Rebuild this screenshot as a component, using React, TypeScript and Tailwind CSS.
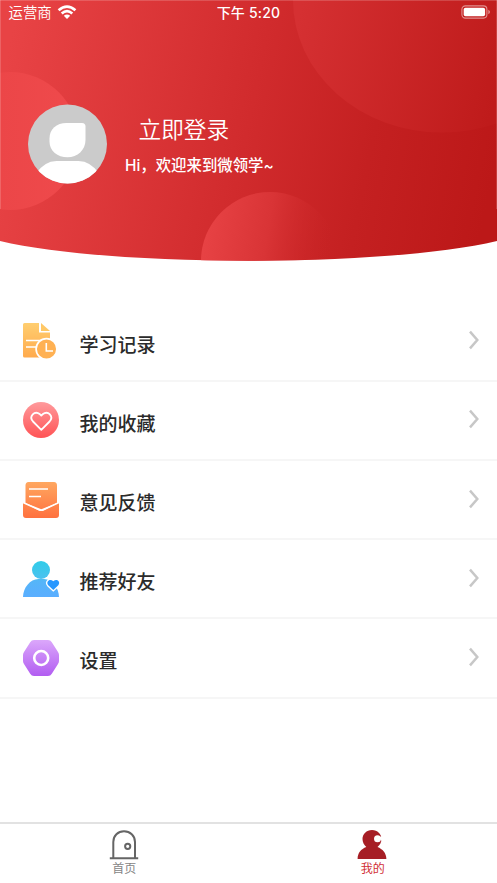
import type { ReactNode } from 'react';

const cjk = "font-['Inter','Noto_Sans_CJK_SC',sans-serif]";

function HeaderArt() {
  return (
    <svg className="absolute inset-0 h-[262px] w-full" viewBox="0 0 497 262" preserveAspectRatio="none">
      <defs>
        <linearGradient id="red" gradientUnits="userSpaceOnUse" x1="0" y1="90" x2="490" y2="190">
          <stop offset="0" stopColor="#e84345" />
          <stop offset="0.5" stopColor="#d12b2d" />
          <stop offset="0.75" stopColor="#c42021" />
          <stop offset="1" stopColor="#bc1818" />
        </linearGradient>
        <linearGradient id="leftBall" gradientUnits="userSpaceOnUse" x1="0" y1="0" x2="80" y2="0">
          <stop offset="0" stopColor="#ec4648" />
          <stop offset="1" stopColor="#ef4a4c" />
        </linearGradient>
        <linearGradient id="rightBall" gradientUnits="userSpaceOnUse" x1="293" y1="40" x2="497" y2="90">
          <stop offset="0" stopColor="#d53032" />
          <stop offset="1" stopColor="#bf1b1b" />
        </linearGradient>
        <linearGradient id="lowBall" gradientUnits="userSpaceOnUse" x1="201" y1="230" x2="332" y2="250">
          <stop offset="0" stopColor="#e84345" />
          <stop offset="0.5" stopColor="#d93436" />
          <stop offset="1" stopColor="#c82324" stopOpacity="0" />
        </linearGradient>
        <clipPath id="dome">
          <path d="M0 0H497V241C387 267.300 110 267.300 0 241Z" />
        </clipPath>
      </defs>
      <g clipPath="url(#dome)">
        <path d="M0 0H497V262H0Z" fill="url(#red)" />
        <circle cx="10" cy="141" r="69" fill="url(#leftBall)" />
        <ellipse cx="442" cy="0" rx="149" ry="132.500" fill="url(#rightBall)" />
        <circle cx="270" cy="261" r="69" fill="url(#lowBall)" />
        <path d="M.5 0V209M496.500 0V209M0 .5H497" stroke="#fff" strokeOpacity=".17" />
      </g>
    </svg>
  );
}

function StatusBar() {
  return (
    <div className="relative grid h-[26px] grid-cols-3 items-center text-white">
      <div className="flex items-center pl-[8.5px]">
        <span className="text-[14.4px] leading-[26px] font-[350]">运营商</span>
        <svg className="mb-px ml-[5px] h-[15px] w-[20px]" viewBox="0 0 20 15" fill="none" stroke="#fff" strokeWidth="2.700">
          <path d="M1.600 5.300Q10-2.200 18.400 5.300M4.700 8.500Q10 3.900 15.300 8.500" />
          <path d="M6.800 10.800Q10 8.100 13.200 10.800L10 14Z" fill="#fff" stroke="none" />
        </svg>
      </div>
      <div className="text-center text-[14px] leading-[26px] font-medium tracking-[0.2px] whitespace-nowrap">下午 5:20</div>
      <div className="flex justify-end pr-[6px]">
        <svg className="mb-[2px] h-[14px] w-[30px]" viewBox="0 0 30 14">
          <rect x="0.900" y="0.900" width="25" height="12.200" rx="3.500" fill="none" stroke="#fff" strokeOpacity=".5" strokeWidth="1.100" />
          <rect x="2.700" y="2.700" width="21.400" height="8.600" rx="1.800" fill="#fff" />
          <path d="M27.300 4.800Q29 5.500 29 7T27.300 9.200Z" fill="#fff" fillOpacity=".5" />
        </svg>
      </div>
    </div>
  );
}

function Avatar() {
  return (
    <svg className="size-[80px] shrink-0" viewBox="0 0 80 80">
      <defs>
        <clipPath id="face"><circle cx="40.500" cy="40" r="39.500" /></clipPath>
      </defs>
      <circle cx="40.500" cy="40" r="39.500" fill="#cbcbcb" />
      <path d="M39.500 19H55Q58.500 19 58.500 22.500V36C58.500 46 50.500 53.300 40.500 53.300C30.500 53.300 22.500 47 22.500 37.500V34.500C22.500 25 29.500 19 39.500 19Z" fill="#fff" />
      <path clipPath="url(#face)" d="M8.500 70Q17.500 57 29.500 57H51.500Q63.500 57 72.500 70V80H8.500Z" fill="#fff" />
    </svg>
  );
}

const icons: Record<string, ReactNode> = {
  record: (
    <>
      <defs><linearGradient id="ic1" x2="0" y2="1"><stop stopColor="#ffce70" /><stop offset="1" stopColor="#ffaa4c" /></linearGradient></defs>
      <path d="M1.500 0H16V9.500H27V34.500H1.500Q0 34.500 0 33V1.500Q0 0 1.500 0Z" fill="url(#ic1)" />
      <path d="M18 0L27 8H18Z" fill="#ffc866" />
      <path d="M3 17.500H18M3 24H14" stroke="#fff" strokeWidth="1.500" />
      <circle cx="23.500" cy="26" r="10.400" fill="#ffb153" stroke="#fff" strokeWidth="1.700" />
      <path d="M23.300 20V28H30" fill="none" stroke="#fff" strokeWidth="1.600" />
    </>
  ),
  heart: (
    <>
      <defs><linearGradient id="ic2" x2="0" y2="1"><stop stopColor="#ff9a9c" /><stop offset="1" stopColor="#ff5355" /></linearGradient></defs>
      <circle cx="18" cy="18" r="18" fill="url(#ic2)" />
      <path d="M18.300 27.800L10 19.500C5.500 14.500 11.500 8 17 12.300L18.300 13.500L19.600 12.300C25.200 8 31.100 14.500 26.600 19.500Z" fill="none" stroke="#fff" strokeWidth="1.800" strokeLinejoin="round" />
    </>
  ),
  mail: (
    <>
      <defs><linearGradient id="ic3" gradientUnits="userSpaceOnUse" x1="0" x2="0" y1="0" y2="36"><stop stopColor="#ffa760" /><stop offset="1" stopColor="#ff713f" /></linearGradient></defs>
      <path d="M5.500 0H31Q34 0 34 3.500V21L18.300 27.300L2.500 21V3.500Q2.500 0 5.500 0Z" fill="url(#ic3)" />
      <path d="M0 20.500L15.500 28.300Q18.300 29.700 21 28.300L36 20.500V33Q36 36 33 36H3Q0 36 0 33Z" fill="url(#ic3)" />
      <path d="M0 20.500L16 27.800Q18.300 28.800 20.500 27.800L36 20.500" fill="none" stroke="#fff" strokeWidth="1.400" />
      <path d="M6 7.100H25M6 14.600H18" stroke="#fff" strokeWidth="1.500" />
    </>
  ),
  friend: (
    <>
      <defs><linearGradient id="ic4" gradientUnits="userSpaceOnUse" x1="0" x2="0" y1="0" y2="36"><stop stopColor="#30cce8" /><stop offset="0.480" stopColor="#4bc2ef" /><stop offset="0.550" stopColor="#55b5f8" /><stop offset="1" stopColor="#5aaeff" /></linearGradient></defs>
      <circle cx="18" cy="9" r="9" fill="url(#ic4)" />
      <path d="M0 36C0 27 7 18 15.500 18H21C29 18 36 27 36 36Z" fill="url(#ic4)" />
      <path d="M30.300 29L25.200 24.300C22.500 20.800 26.800 17 30.300 20.300C33.800 17 38 20.800 35.300 24.300Z" fill="#2898ff" stroke="#fff" strokeWidth="2.600" paintOrder="stroke" />
    </>
  ),
  settings: (
    <>
      <defs><linearGradient id="ic5" x2="0" y2="1"><stop stopColor="#dba7fb" /><stop offset="1" stopColor="#b25df1" /></linearGradient></defs>
      <path d="M11 0H25Q27.500 0 28.800 2.200L35 12Q36 13.500 36 15V21Q36 22.500 35 24L28.800 33.800Q27.500 36 25 36H11Q8.500 36 7.200 33.800L1 24Q0 22.500 0 21V15Q0 13.500 1 12L7.200 2.200Q8.500 0 11 0Z" fill="url(#ic5)" />
      <circle cx="18.200" cy="18" r="7" fill="none" stroke="#fff" strokeWidth="2.600" />
    </>
  ),
};

function MenuRow({ icon, label }: { icon: string; label: string }) {
  return (
    <div className="flex h-[79.2px] items-center border-b-2 border-[#f6f6f6] pr-[18.5px] pl-[23px]">
      <svg className="size-[36px] overflow-visible" viewBox="0 0 36 36">{icons[icon]}</svg>
      <span className="mt-[9px] ml-[20.5px] flex-1 text-[19px] leading-[28px] font-medium text-[#2b2b2b]">{label}</span>
      <svg className="mb-[2px] h-[18px] w-[11px] overflow-visible" viewBox="0 0 11 18">
        <path d="M2 .7L9.300 9L2 17.300" fill="none" stroke="#c7c7c7" strokeWidth="2.500" />
      </svg>
    </div>
  );
}

export default function App() {
  return (
    <div className={`flex h-[883px] w-full flex-col overflow-hidden bg-white ${cjk}`}>
      <header className="relative h-[262px] shrink-0">
        <HeaderArt />
        <StatusBar />
        <div className="relative mt-[78px] ml-[27px] flex text-white">
          <Avatar />
          <div className="ml-[18px]">
            <div className="mt-[9px] ml-[13.5px] text-[22.7px] leading-[34px] font-[350]">立即登录</div>
            <div className="mt-[7px] text-[15.4px] leading-[24px] font-medium whitespace-nowrap">Hi，欢迎来到微领学~</div>
          </div>
        </div>
      </header>
      <main className="mt-[40.6px] flex-1">
        <MenuRow icon="record" label="学习记录" />
        <MenuRow icon="heart" label="我的收藏" />
        <MenuRow icon="mail" label="意见反馈" />
        <MenuRow icon="friend" label="推荐好友" />
        <MenuRow icon="settings" label="设置" />
      </main>
      <nav className="grid h-[61px] shrink-0 grid-cols-2 border-t-2 border-[#e2e2e2] text-[12px] leading-[18px]">
        <div className="flex flex-col items-center pt-[6px] text-[#858585]">
          <svg className="h-[30px] w-[30px]" viewBox="0 0 30 30" fill="none" stroke="#656565" strokeWidth="2">
            <path d="M.8 28.200H29.200M4.300 28V12C4.300 5.800 9 1.300 15 1.300S26 5.800 26 12V28" />
            <circle cx="18.700" cy="16.300" r="2.600" />
          </svg>
          <span>首页</span>
        </div>
        <div className="flex flex-col items-center pt-[6px] text-[#d12f35]">
          <svg className="-ml-px h-[30px] w-[30px]" viewBox="0 0 30 30">
            <path d="M15 0C20.500 0 24.500 4 24.500 9C24.500 12 23 15 20.500 17C25.500 19 29.400 23 29.400 29H.6C.6 23 4 19 9.300 17C7 15 5.500 12 5.500 9C5.500 4 9.500 0 15 0Z" fill="#a61e25" />
            <circle cx="20.500" cy="8.800" r="3.500" fill="#fff" />
            <path d="M20.500 7L25 6.500V11Z" fill="#fff" />
          </svg>
          <span>我的</span>
        </div>
      </nav>
    </div>
  );
}
